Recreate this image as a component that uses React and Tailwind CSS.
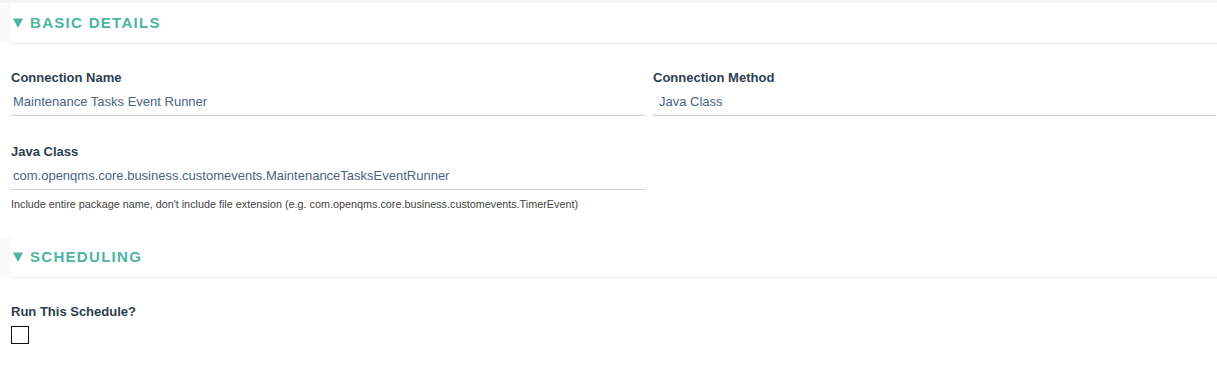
import React from 'react';

const SectionHeader = ({ title }) => (
  <div className="flex">
    <div className="w-[11px] h-[40px] bg-[#fafafa] shrink-0" />
    <div className="flex-1 h-[41px] border-b border-[#ebebeb] flex items-center pb-[1px]">
      <svg width="10" height="10" viewBox="0 0 10 10" className="ml-[2px] mr-[7px]">
        <path d="M0 0.5 H10 L5 10 Z" fill="#4cb5a1" />
      </svg>
      <span className="text-[#4cb5a1] text-[15px] font-bold tracking-[1.3px] leading-none">{title}</span>
    </div>
  </div>
);

const Field = ({ label, value, className = '', valuePad = 'pl-[2px]' }) => (
  <div className={className}>
    <div className="h-4 text-[13px] leading-4 font-bold text-[#2d3e50]">{label}</div>
    <div className={`h-[30px] border-b border-[#c6cdd7] flex items-center pt-[3px] ${valuePad} text-[13px] text-[#4a6484]`}>
      {value}
    </div>
  </div>
);

export default function App() {
  return (
    <div className="w-full min-h-[366px] bg-white font-['Liberation_Sans',Arial,sans-serif]">
      <div className="h-[3px] bg-[#f3f3f3]" />
      <SectionHeader title="BASIC DETAILS" />

      <div className="pl-[11px] pr-[1px]">
        <div className="flex gap-[8px] mt-[26px]">
          <Field label="Connection Name" value="Maintenance Tasks Event Runner" className="w-[634px]" />
          <Field label="Connection Method" value="Java Class" className="flex-1" valuePad="pl-[6px]" />
        </div>

        <div className="mt-[28px] w-[634px]">
          <Field label="Java Class" value="com.openqms.core.business.customevents.MaintenanceTasksEventRunner" />
          <p className="mt-[8px] text-[10.8px] leading-[12px] text-[#444]">
            Include entire package name, don't include file extension (e.g. com.openqms.core.business.customevents.TimerEvent)
          </p>
        </div>
      </div>

      <div className="mt-[27px]">
        <SectionHeader title="SCHEDULING" />
      </div>

      <div className="pl-[11px]">
        <div className="mt-[26px] h-4 text-[13px] leading-4 font-bold text-[#2d3e50]">Run This Schedule?</div>
        <div className="mt-[6px] w-[18px] h-[18px] border border-[#111] bg-white" />
      </div>
    </div>
  );
}
